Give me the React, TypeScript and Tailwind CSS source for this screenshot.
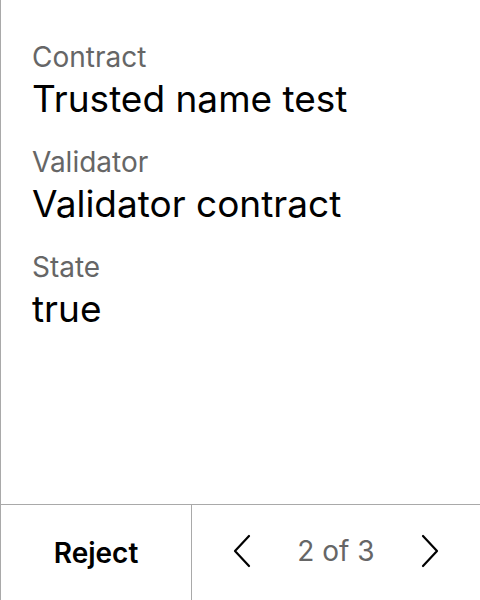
const fields = [
  { label: "Contract", value: "Trusted name test" },
  { label: "Validator", value: "Validator contract" },
  { label: "State", value: "true" },
];

function Chevron({ dir }: { dir: "left" | "right" }) {
  return (
    <svg width="18" height="34" viewBox="0 0 18 34" fill="none">
      <path
        d={dir === "left" ? "M16 2 L2 17 L16 32" : "M2 2 L16 17 L2 32"}
        stroke="#000"
        strokeWidth="2.2"
        strokeLinecap="round"
        strokeLinejoin="round"
      />
    </svg>
  );
}

export default function App() {
  return (
    <div
      className="flex h-[600px] w-[480px] flex-col border-l border-[#a9a9a9] bg-white text-black"
      style={{ fontFamily: "Inter, sans-serif" }}
    >
      <div className="flex flex-1 flex-col gap-[23px] pl-[31px] pt-[39px]">
        {fields.map((field) => (
          <div key={field.label} className="flex flex-col gap-[2px]">
            <span className="text-[28px] leading-[36px] text-[#666666]">
              {field.label}
            </span>
            <span className="text-[37px] leading-[44px]">{field.value}</span>
          </div>
        ))}
      </div>
      <div className="flex h-[96px] border-t border-[#a9a9a9]">
        <button className="flex w-[191px] items-center justify-center border-r border-[#a9a9a9] text-[28px] font-semibold">
          Reject
        </button>
        <div className="flex flex-1 items-center justify-between px-[41px] pb-[3px]">
          <Chevron dir="left" />
          <span className="text-[28px] text-[#666666]">2 of 3</span>
          <Chevron dir="right" />
        </div>
      </div>
    </div>
  );
}
